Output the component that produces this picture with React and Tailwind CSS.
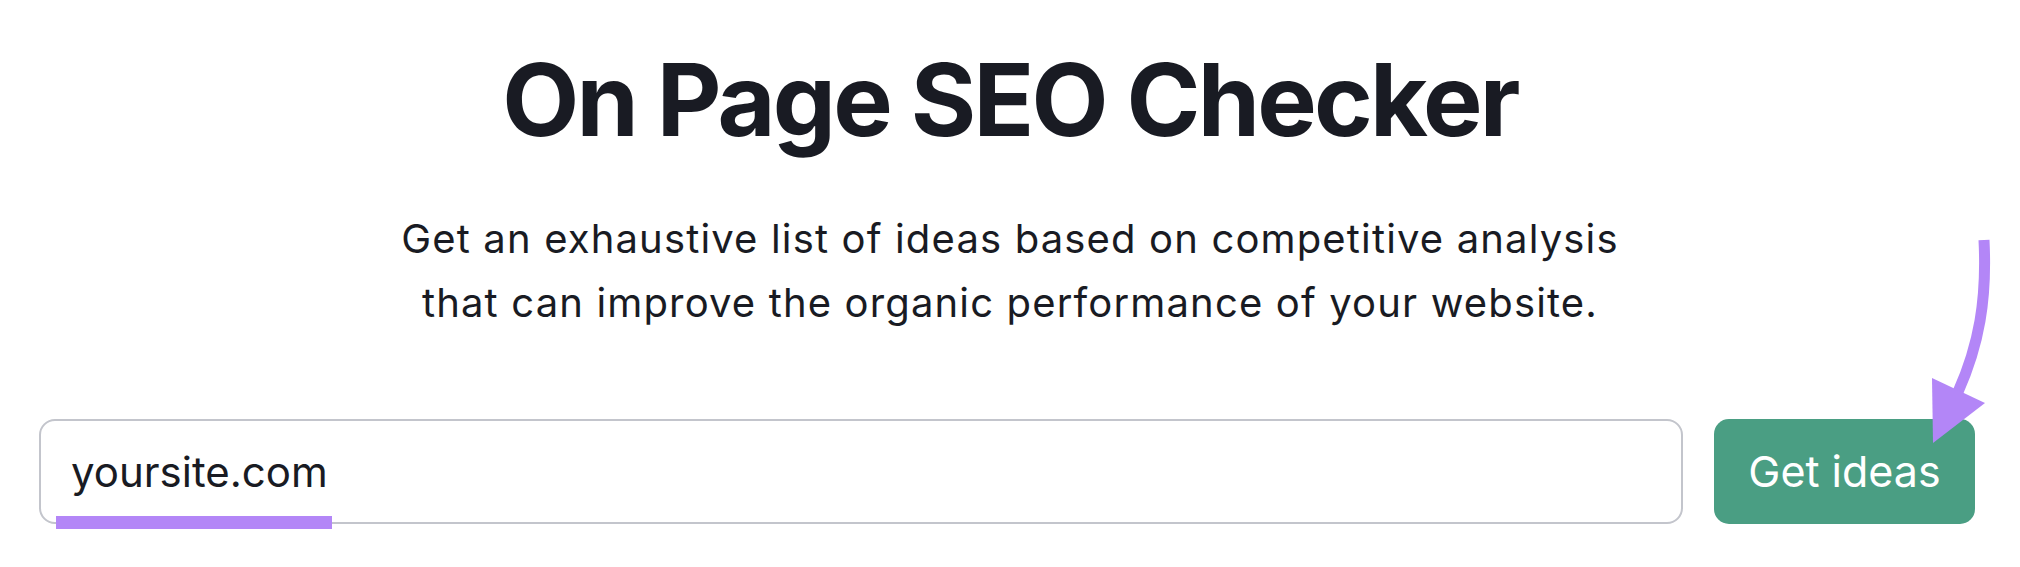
import React from 'react';

export default function App() {
  return (
    <div className="relative h-[567px] w-[2020px] overflow-hidden bg-white text-[#191b23]" style={{ fontFamily: 'Inter, "Noto Sans", sans-serif' }}>
      <div className="flex flex-col items-center pt-[50px]">
        <h1 className="text-[100px] font-bold leading-[100px] tracking-[-2.8px]">On Page SEO Checker</h1>
        <p className="mt-[57px] text-center text-[40px] leading-[64px] tracking-[1.15px]">
          Get an exhaustive list of ideas based on competitive analysis
          <br />
          that can improve the organic performance of your website.
        </p>
      </div>

      <div className="mt-[84px] flex gap-[31px] pl-[39px] pr-[45px]">
        <div className="relative flex h-[105px] flex-1 items-center rounded-[16px] border-2 border-[#c3c5cc] pl-[30px]">
          <span className="text-[42px]">yoursite.com</span>
          {/* highlight under the domain */}
          <div className="absolute left-[15px] top-[95px] h-[13px] w-[276px] bg-[#b386f7]" />
        </div>
        <button className="h-[105px] w-[261px] rounded-[15px] bg-[#4a9e83] text-[43px] text-white">
          Get ideas
        </button>
      </div>

      {/* arrow pointing at the button */}
      <svg className="absolute left-0 top-0" width="2020" height="567" viewBox="0 0 2020 567">
        <path d="M1984 240 C1987 300 1979 345 1958 392" fill="none" stroke="#b386f7" strokeWidth="11" />
        <polygon points="1932,378 1985,403 1933,443" fill="#b386f7" />
      </svg>
    </div>
  );
}
